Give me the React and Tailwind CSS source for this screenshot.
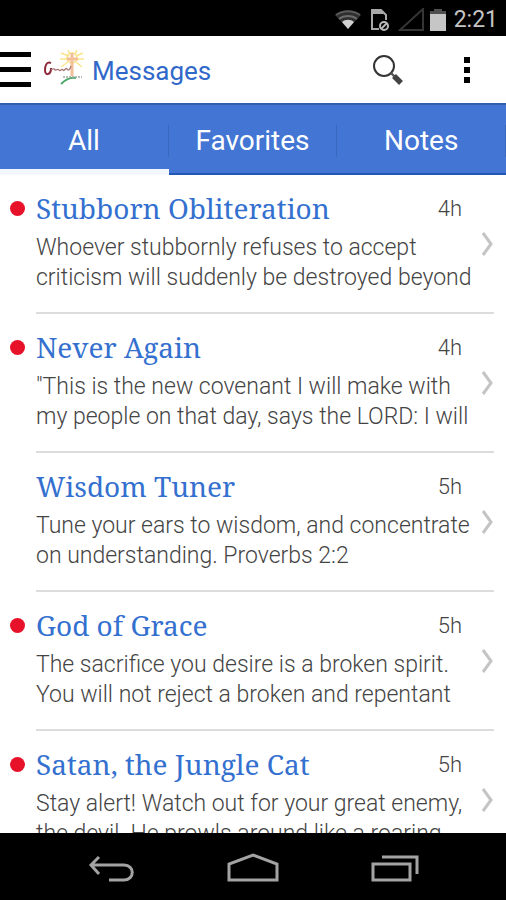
import React, { useState } from 'react';

const tabs = ['All', 'Favorites', 'Notes'];

const messages = [
  {
    title: 'Stubborn Obliteration',
    time: '4h',
    unread: true,
    lines: ['Whoever stubbornly refuses to accept', 'criticism will suddenly be destroyed beyond'],
  },
  {
    title: 'Never Again',
    time: '4h',
    unread: true,
    lines: ['"This is the new covenant I will make with', 'my people on that day, says the LORD: I will'],
  },
  {
    title: 'Wisdom Tuner',
    time: '5h',
    unread: false,
    lines: ['Tune your ears to wisdom, and concentrate', 'on understanding. Proverbs 2:2'],
  },
  {
    title: 'God of Grace',
    time: '5h',
    unread: true,
    lines: ['The sacrifice you desire is a broken spirit.', 'You will not reject a broken and repentant'],
  },
  {
    title: 'Satan, the Jungle Cat',
    time: '5h',
    unread: true,
    lines: ['Stay alert! Watch out for your great enemy,', 'the devil. He prowls around like a roaring'],
  },
];

function StatusBar() {
  return (
    <div className="flex h-9 shrink-0 items-center justify-end bg-black pt-1 pr-2 text-[#c4c4c4]">
      <svg className="mr-2 h-5 w-7" viewBox="0 0 28 20" fill="none">
        <path d="M1 5C9-1 19-1 27 5L14 19Z" fill="#2e2e2e" />
        <path d="M2 5C9 0 19 0 26 5" stroke="#5a5a5a" strokeWidth="2" />
        <path d="M5 9C10 5 18 5 23 9" stroke="#6c6c6c" strokeWidth="2" />
        <path d="M8 12C11 9 17 9 20 12L14 19Z" fill="#d2d2d2" />
      </svg>
      <svg className="mr-2 h-6 w-5" viewBox="0 0 20 24" fill="none">
        <path d="M9 21H2V2h9l5 5v5" stroke="#a8a8a8" strokeWidth="2" />
        <path d="M2 2h9l4 4H2Z" fill="#a8a8a8" />
        <circle cx="14" cy="18" r="4" stroke="#b8b8b8" strokeWidth="2" />
        <path d="M11 21l6-6" stroke="#b8b8b8" strokeWidth="2" />
      </svg>
      <svg className="mr-1 h-6 w-7" viewBox="0 0 28 24" fill="none">
        <path d="M2 22L25 1v21Z" stroke="#353535" strokeWidth="2" />
      </svg>
      <svg className="mr-2 h-6 w-4" viewBox="0 0 16 24">
        <path d="M4 1h8v2h4v5H0V3h4Z" fill="#505050" />
        <path d="M0 6h16v17H0Z" fill="#c6c6c6" />
      </svg>
      <span className="text-[23px]">2:21</span>
    </div>
  );
}

function Logo() {
  return (
    <svg className="ml-3 h-10 w-10 shrink-0" viewBox="0 0 40 40" fill="none">
      <g stroke="#fae48c" strokeWidth="1.5">
        <path d="M25 6L17 3M26 4L24 0M31 4L33 0M32 6L39 3M33 9h7M32 12l6 5M24 12l-7 5M23 9h-7" />
      </g>
      <circle cx="28" cy="8" r="5" stroke="#fbe08a" strokeWidth="1.5" />
      <path d="M28 3v23M23 9h11" stroke="#f3bf98" strokeWidth="3" />
      <path d="M7 13C2 11 1 17 1 20c0 6 5 5 6 0v-2" stroke="#8f2a3a" strokeWidth="2" />
      <path d="M7 20c2-2 4-1 4 0s3-2 4 0 3-2 4 0 3-3 4-1 3 1 4-3" stroke="#a97778" strokeWidth="1.3" />
      <path d="M17 34c5-5 10-7 15-6" stroke="#4fa86b" strokeWidth="2" />
      <path d="M19 27h19" stroke="#a2aaa0" strokeWidth="1.5" strokeDasharray="2 1" />
    </svg>
  );
}

function Header() {
  return (
    <header className="flex h-[67px] shrink-0 items-center bg-white">
      <button aria-label="Menu" className="w-8 shrink-0">
        <svg className="h-10 w-8" viewBox="0 0 32 40">
          <path d="M0 2h31v5H0zM0 17h31v5H0zM0 32h31v5H0z" fill="#000" />
        </svg>
      </button>
      <Logo />
      <h1 className="ml-2 flex-1 pt-[3px] text-[26px] text-[#3069c9]">Messages</h1>
      <button aria-label="Search" className="mr-11">
        <svg className="h-9 w-9" viewBox="0 0 36 36" fill="none">
          <circle cx="14" cy="14" r="10" stroke="#333" strokeWidth="2" />
          <path d="M21 21l4 4" stroke="#555" strokeWidth="2.4" />
          <path d="M24 24l7 7" stroke="#444" strokeWidth="5.5" />
        </svg>
      </button>
      <button aria-label="More options" className="mr-6">
        <svg className="h-8 w-8" viewBox="0 0 32 32">
          <path d="M14 3h6v6h-6zM14 13h6v6h-6zM14 23h6v6h-6z" fill="#000" />
        </svg>
      </button>
    </header>
  );
}

function MessageRow({ message }) {
  return (
    <li>
      <a href="#message" className="flex">
        <span className="w-9 shrink-0 pt-[26px] pl-[10px]">
          {message.unread && <span className="block h-[15px] w-[15px] rounded-full bg-[#e8112a]" />}
        </span>
        <div className="mr-3 flex min-w-0 flex-1 border-b-2 border-[#dcdcdc] pt-[15px] pb-[19px]">
          <div className="min-w-0 flex-1">
            <div className="flex items-center justify-between">
              <h2 className="truncate font-['Noto_Serif','DejaVu_Serif_Condensed','DejaVu_Serif',serif] text-[28px] leading-9 text-[#3470cf]">
                {message.title}
              </h2>
              <span className="text-[22px] font-light text-[#444]">{message.time}</span>
            </div>
            <p className="mt-[7px] text-[23px] leading-[30px] font-light whitespace-nowrap text-[#444]">
              {message.lines.map((line) => (
                <span key={line} className="block">
                  {line}
                </span>
              ))}
            </p>
          </div>
          <svg className="mt-10 ml-4 h-7 w-4 shrink-0" viewBox="0 0 16 28" fill="none">
            <path d="M5 3l8 11-8 11" stroke="#c4c4c4" strokeWidth="3" />
          </svg>
        </div>
      </a>
    </li>
  );
}

function NavBar() {
  return (
    <nav className="flex h-[67px] shrink-0 items-center justify-center gap-[90px] bg-black pt-1">
      <button aria-label="Back">
        <svg className="h-8 w-12" viewBox="0 0 48 32" fill="none" stroke="#a3a3a3" strokeWidth="3">
          <path d="M12 4L4 12l8 9M4 12h33c11 0 11 15 0 15H22" />
        </svg>
      </button>
      <button aria-label="Home">
        <svg className="h-8 w-14" viewBox="0 0 56 32" fill="none" stroke="#a3a3a3" strokeWidth="3">
          <path d="M4 27V11L28 2l24 9v16Z" />
        </svg>
      </button>
      <button aria-label="Recent apps">
        <svg className="h-8 w-12" viewBox="0 0 48 32" fill="none" stroke="#a3a3a3" strokeWidth="3">
          <path d="M2 11h37v16H2zM11 4h35v17" />
        </svg>
      </button>
    </nav>
  );
}

export default function App() {
  const [active, setActive] = useState('All');

  return (
    <div className="flex h-screen flex-col overflow-hidden bg-white font-[Roboto,sans-serif]">
      <StatusBar />
      <Header />
      <div className="flex h-[72px] shrink-0 border-t-2 border-[#315fae] bg-[#4275d4]" role="tablist">
        {tabs.map((tab) => (
          <button
            key={tab}
            role="tab"
            aria-selected={active === tab}
            onClick={() => setActive(tab)}
            className={`flex flex-1 items-center text-[28px] text-white ${
              active === tab ? 'border-b-[6px] border-[#f3f6fd] pt-2' : 'border-b-2 border-[#2158b4] pt-1'
            }`}
          >
            <span className="h-8 flex-1 border-r border-[#3b68bf] leading-8">{tab}</span>
          </button>
        ))}
      </div>
      <ul className="min-h-0 flex-1 overflow-hidden">
        {messages.map((message) => (
          <MessageRow key={message.title} message={message} />
        ))}
      </ul>
      <NavBar />
    </div>
  );
}
